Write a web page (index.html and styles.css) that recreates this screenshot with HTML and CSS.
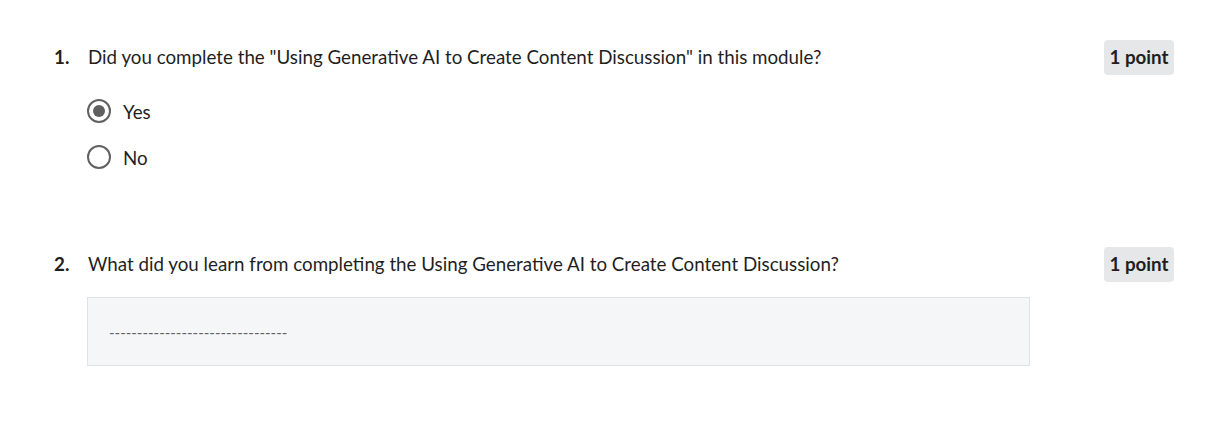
FILE: index.html
```html
<!DOCTYPE html>
<html>
<head>
<meta charset="utf-8">
<link rel="stylesheet" href="styles.css">
</head>
<body>
<div class="quiz">
  <div class="question">
    <div class="q-head">
      <span class="q-num">1.</span>
      <span class="q-text">Did you complete the "Using Generative AI to Create Content Discussion" in this module?</span>
      <span class="badge">1 point</span>
    </div>
    <div class="options">
      <label class="option">
        <span class="radio checked"></span>
        <span class="opt-text">Yes</span>
      </label>
      <label class="option">
        <span class="radio"></span>
        <span class="opt-text">No</span>
      </label>
    </div>
  </div>
  <div class="question q2">
    <div class="q-head">
      <span class="q-num">2.</span>
      <span class="q-text">What did you learn from completing the Using Generative AI to Create Content Discussion?</span>
      <span class="badge">1 point</span>
    </div>
    <div class="answer">
      <span class="answer-text">--------------------------------</span>
    </div>
  </div>
</div>
</body>
</html>
```
FILE: styles.css
```css
* { box-sizing: border-box; }
html, body {
  margin: 0;
  padding: 0;
  background: #ffffff;
}
body {
  font-family: "Lato", "Open Sans", sans-serif;
  color: #1f1f1f;
  font-size: 18.75px;
}
.quiz {
  padding: 40px 45px 0 54px;
  display: flex;
  flex-direction: column;
}
.question {
  display: flex;
  flex-direction: column;
}
.q2 {
  margin-top: 78px;
}
.q-head {
  display: flex;
  align-items: center;
  height: 35px;
}
.q-num {
  width: 34px;
  font-weight: 700;
  flex: none;
  margin-top: -2px;
}
.q-text {
  flex: 1;
  margin-top: -2px;
}
.badge {
  flex: none;
  background: #e5e7e8;
  border-radius: 4px;
  font-weight: 700;
  height: 35px;
  line-height: 34px;
  width: 70px;
  text-align: center;
}
.options {
  display: flex;
  flex-direction: column;
  padding-left: 33px;
  margin-top: 24px;
  gap: 22px;
}
.option {
  display: flex;
  align-items: center;
  height: 24px;
}
.radio {
  width: 24px;
  height: 24px;
  border: 2.5px solid #616161;
  border-radius: 50%;
  display: flex;
  align-items: center;
  justify-content: center;
  flex: none;
}
.radio.checked::after {
  content: "";
  width: 12px;
  height: 12px;
  border-radius: 50%;
  background: #5f5f5f;
}
.opt-text {
  margin-left: 12px;
}
.answer {
  margin-top: 15px;
  margin-left: 33px;
  width: 943px;
  height: 69px;
  background: #f5f6f8;
  border: 1px solid #e1e2e4;
  display: flex;
  align-items: center;
  padding-left: 21px;
}
.answer-text {
  font-size: 15px;
  color: #636363;
}
```
